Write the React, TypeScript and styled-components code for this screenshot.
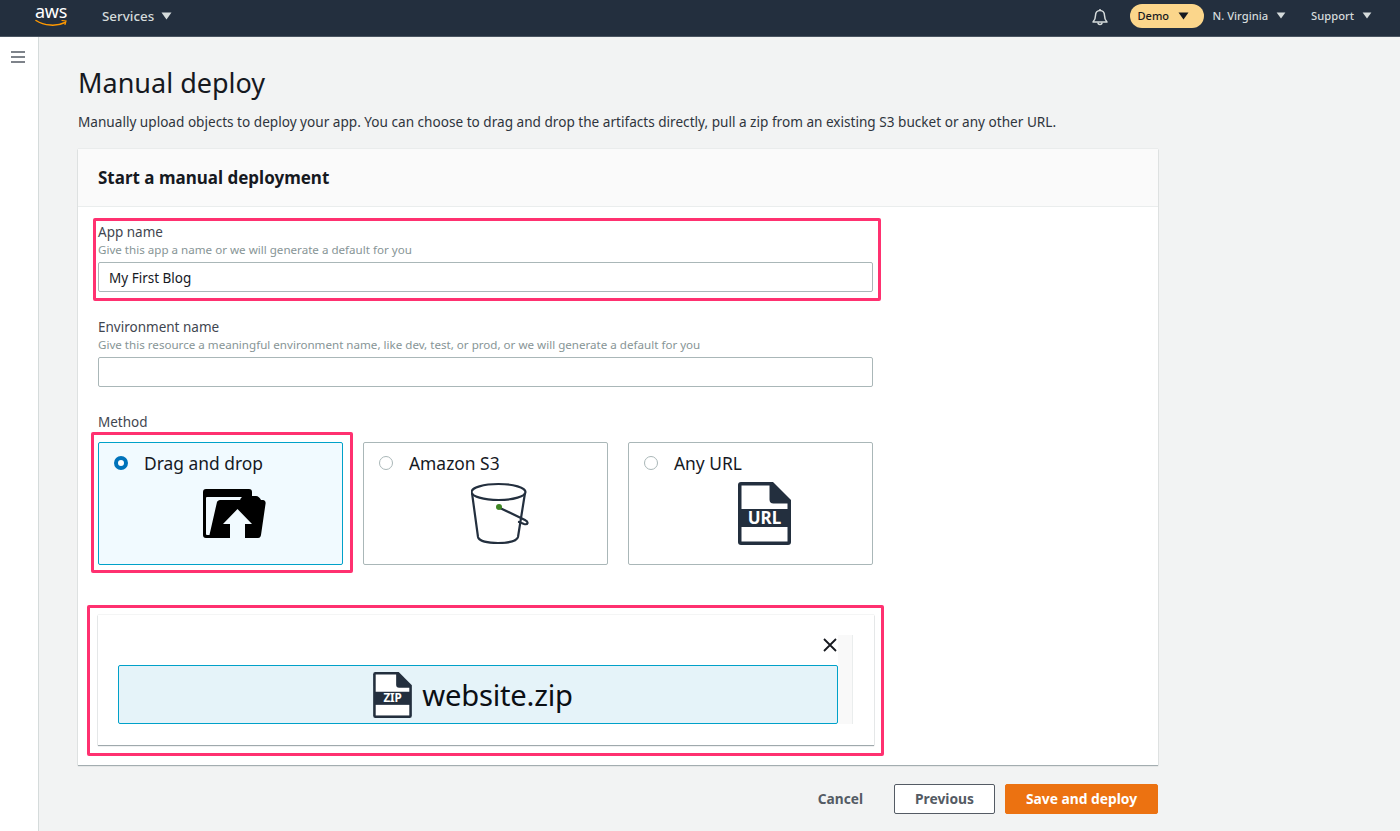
import React from "react";
import styled, { createGlobalStyle } from "styled-components";

const Global = createGlobalStyle`
  html, body { margin: 0; padding: 0; height: 831px; overflow: hidden; background: #f2f3f3; }
  body { font-family: "Noto Sans", "Open Sans", Arial, sans-serif; color: #16191f; }
  * { box-sizing: border-box; }
`;

const Page = styled.div`
  width: 1400px;
  height: 831px;
  display: flex;
  flex-direction: column;
`;

const TopBar = styled.header`
  height: 37px;
  flex: none;
  background: #232f3e;
  border-bottom: 1px solid #4a5561;
  display: flex;
  align-items: center;
  color: #d5dbdb;
  padding: 0 28px 0 35px;
`;

const Logo = styled.div`
  width: 32px;
  height: 30px;
  color: #fff;
`;

const LogoText = styled.span`
  display: block;
  height: 16px;
  font-size: 18px;
  line-height: 16px;
  letter-spacing: -0.3px;
  text-align: center;
`;

const NavItem = styled.div<{ $ml?: number; $size?: number }>`
  display: flex;
  align-items: center;
  gap: ${(p) => (p.$size ? 7 : 8)}px;
  margin-left: ${(p) => p.$ml ?? 0}px;
  font-size: ${(p) => p.$size ?? 11.2}px;
  font-weight: 500;
  color: #d5dbdb;
  margin-top: -5px;
`;

const Caret = styled.svg`
  display: block;
  flex: none;
`;

const Spacer = styled.div`
  flex: 1;
`;

const Pill = styled.div`
  width: 74px;
  height: 24px;
  margin-left: 21px;
  margin-top: -5px;
  border-radius: 12px;
  background: #fbd68b;
  color: #16191f;
  font-size: 11px;
  font-weight: 500;
  display: flex;
  align-items: center;
  gap: 9px;
  padding-left: 8px;
`;

const BellIcon = styled.svg`
  margin-top: -3px;
`;

const Body = styled.div`
  flex: 1;
  display: flex;
  min-height: 0;
`;

const Rail = styled.aside`
  width: 39px;
  flex: none;
  background: #fff;
  border-right: 1px solid #d5dbdb;
  padding: 14px 0 0 11px;
`;

const Main = styled.main`
  flex: 1;
  padding: 27px 0 0 39px;
`;

const Title = styled.h1`
  margin: 0;
  font-size: 27px;
  line-height: 38px;
  font-weight: 400;
  color: #16191f;
`;

const Lead = styled.p`
  margin: 10px 0 0;
  font-size: 13.6px;
  line-height: 20px;
  color: #2f353d;
`;

const Card = styled.section`
  width: 1080px;
  height: 616px;
  margin-top: 17px;
  background: #fff;
  box-shadow: 0 1px 1px 0 rgba(0, 28, 36, 0.3), 0 0 1px 0 rgba(0, 28, 36, 0.2);
`;

const CardHead = styled.div`
  height: 58px;
  background: #fafafa;
  border-bottom: 1px solid #eaeded;
  padding: 0 20px;
  display: flex;
  align-items: center;
  font-size: 17px;
  font-weight: 700;
  color: #16191f;
`;

const Form = styled.div`
  width: 815px;
  padding: 15px 20px 0;
`;

const Field = styled.div<{ $mt?: number }>`
  position: relative;
  margin-top: ${(p) => p.$mt ?? 0}px;
`;

const Label = styled.div`
  font-size: 13.5px;
  line-height: 20px;
  color: #3f4650;
`;

const Hint = styled.div`
  font-size: 11.6px;
  line-height: 16px;
  color: #879596;
`;

const Input = styled.div`
  height: 30px;
  margin-top: 4px;
  border: 1px solid #aab7b8;
  border-radius: 2px;
  background: #fff;
  padding: 1px 10px 0;
  display: flex;
  align-items: center;
  font-size: 13.5px;
  color: #16191f;
`;

const Highlight = styled.div<{ $t: number; $r: number; $b: number; $l: number }>`
  position: absolute;
  top: ${(p) => p.$t}px;
  right: ${(p) => p.$r}px;
  bottom: ${(p) => p.$b}px;
  left: ${(p) => p.$l}px;
  border: 3px solid #ff3170;
  border-radius: 2px;
  pointer-events: none;
`;

const Tiles = styled.div`
  display: grid;
  grid-template-columns: repeat(3, 245px);
  column-gap: 20px;
  margin-top: 10px;
`;

const TileWrap = styled.div`
  position: relative;
`;

const Tile = styled.div<{ $on?: boolean }>`
  height: 123px;
  border: 1px solid ${(p) => (p.$on ? "#00a1c9" : "#aab7b8")};
  border-radius: 2px;
  background: ${(p) => (p.$on ? "#f1faff" : "#fff")};
  padding: 9px 15px 0;
`;

const TileHead = styled.div`
  display: flex;
  align-items: center;
  height: 22px;
  gap: 16px;
  font-size: 17.4px;
  color: #16191f;
`;

const Radio = styled.span<{ $on?: boolean }>`
  width: 14px;
  height: 14px;
  flex: none;
  border-radius: 50%;
  background: #fff;
  border: ${(p) => (p.$on ? "4px solid #0073bb" : "1px solid #aab7b8")};
`;

const TileIcon = styled.div<{ $mt: number; $pl?: number }>`
  display: flex;
  justify-content: center;
  margin-top: ${(p) => p.$mt}px;
  padding-left: ${(p) => p.$pl ?? 27}px;
`;

const DropArea = styled.div`
  position: relative;
  margin-top: 50px;
`;

const Upload = styled.div`
  width: 776px;
  height: 130px;
  background: #fff;
  box-shadow: 0 1px 1px 0 rgba(0, 28, 36, 0.35), 0 0 1px 0 rgba(0, 28, 36, 0.25);
  padding: 20px 20px 0;
`;

const Scroller = styled.div`
  width: 735px;
  height: 89px;
  position: relative;
  display: flex;
  flex-direction: column;
  justify-content: flex-end;
  background: linear-gradient(to right, #fff 720px, #f9f9f9 720px);
  border-right: 1px solid #eaeded;
`;

const Close = styled.svg`
  position: absolute;
  top: 3px;
  right: 15px;
`;

const ZipBar = styled.div`
  width: 720px;
  height: 59px;
  background: #e5f3f9;
  border: 1px solid #00a1c9;
  border-radius: 2px;
  display: flex;
  justify-content: center;
  align-items: center;
  gap: 10px;
  font-size: 29.2px;
  letter-spacing: -0.2px;
  color: #0b0f14;
  padding-right: 10px;
`;

const Footer = styled.div`
  width: 1080px;
  margin-top: 19px;
  display: flex;
  justify-content: flex-end;
  align-items: center;
`;

const LinkButton = styled.div`
  font-size: 13.7px;
  font-weight: 700;
  color: #545b64;
  margin-right: 31px;
  padding-bottom: 2px;
`;

const Button = styled.div<{ $primary?: boolean }>`
  height: 30px;
  display: flex;
  align-items: center;
  justify-content: center;
  width: ${(p) => (p.$primary ? 153 : 101)}px;
  margin-left: ${(p) => (p.$primary ? 10 : 0)}px;
  padding-bottom: 2px;
  border-radius: 2px;
  font-size: 13.8px;
  font-weight: 700;
  color: ${(p) => (p.$primary ? "#fff" : "#545b64")};
  background: ${(p) => (p.$primary ? "#ec7211" : "#fff")};
  border: 1px solid ${(p) => (p.$primary ? "#ec7211" : "#545b64")};
`;

const CaretDown = ({ color = "#d5dbdb", w = 11, h = 8 }: { color?: string; w?: number; h?: number }) => (
  <Caret width={w} height={h} viewBox="0 0 11 8">
    <path d="M0.5 0.5h10L5.5 7.5z" fill={color} />
  </Caret>
);

const FileIcon = ({ label, w, h, size }: { label: string; w: number; h: number; size: number }) => (
  <svg width={w} height={h} viewBox="0 0 53 63" style={{ display: "block", flex: "none" }}>
    <path d="M3 0h32l18 18v42a3 3 0 0 1-3 3H3a3 3 0 0 1-3-3V3a3 3 0 0 1 3-3z" fill="#232f3e" />
    <path d="M3.5 3.500h28v14a4 4 0 0 0 4 4h14v5.500h-46z" fill="#fff" />
    <rect x="3.500" y="45" width="46" height="14.500" fill="#fff" />
    <text
      x="26.500"
      y="41.500"
      textAnchor="middle"
      fontFamily="'Noto Sans', sans-serif"
      fontWeight="700"
      fontSize={size}
      fill="#fff"
    >
      {label}
    </text>
  </svg>
);

export default function App() {
  return (
    <Page>
      <Global />
      <TopBar>
        <Logo>
          <LogoText>aws</LogoText>
          <svg width="33" height="9" viewBox="0 0 33 9" style={{ display: "block" }}>
            <path d="M1 1.500C9 7 22 7.500 30 3.500" fill="none" stroke="#f90" strokeWidth="1.500" strokeLinecap="round" />
            <path d="M27 1.500l4 .5-1 3.500" fill="none" stroke="#f90" strokeWidth="1.200" strokeLinecap="round" />
          </svg>
        </Logo>
        <NavItem $ml={35} $size={13.4}>
          Services
          <CaretDown />
        </NavItem>
        <Spacer />
        <BellIcon width="18" height="18" viewBox="0 0 18 18">
          <path
            d="M2 14c2-2 2.500-3.500 2.500-6.500C4.500 4.500 6.500 2.500 9 2.500s4.500 2 4.500 5c0 3 .5 4.500 2.500 6.500z"
            fill="none"
            stroke="#d5dbdb"
            strokeWidth="1.500"
            strokeLinejoin="round"
          />
          <path d="M7 14.500a2 2 0 0 0 4 0M9 1v1.500" fill="none" stroke="#d5dbdb" strokeWidth="1.500" />
        </BellIcon>
        <Pill>
          Demo
          <CaretDown color="#16191f" />
        </Pill>
        <NavItem $ml={9}>
          N. Virginia
          <CaretDown w={10} h={7} />
        </NavItem>
        <NavItem $ml={25}>
          Support
          <CaretDown w={10} h={7} />
        </NavItem>
      </TopBar>
      <Body>
        <Rail>
          <svg width="14" height="12" viewBox="0 0 14 12" style={{ display: "block" }}>
            <path d="M0 1h14M0 6h14M0 11h14" stroke="#545b64" strokeWidth="1.600" />
          </svg>
        </Rail>
        <Main>
          <Title>Manual deploy</Title>
          <Lead>
            Manually upload objects to deploy your app. You can choose to drag and drop the artifacts directly, pull a
            zip from an existing S3 bucket or any other URL.
          </Lead>
          <Card>
            <CardHead>Start a manual deployment</CardHead>
            <Form>
              <Field>
                <Label>App name</Label>
                <Hint>Give this app a name or we will generate a default for you</Hint>
                <Input>My First Blog</Input>
                <Highlight $t={-4} $r={-8} $b={-9} $l={-5} />
              </Field>
              <Field $mt={25}>
                <Label>Environment name</Label>
                <Hint>Give this resource a meaningful environment name, like dev, test, or prod, or we will generate a default for you</Hint>
                <Input />
              </Field>
              <Field $mt={25}>
                <Label>Method</Label>
                <Tiles>
                  <TileWrap>
                    <Tile $on>
                      <TileHead>
                        <Radio $on />
                        Drag and drop
                      </TileHead>
                      <TileIcon $mt={15} $pl={29}>
                        <svg width="63" height="49" viewBox="0 0 63 49" style={{ display: "block", marginLeft: -2 }}>
                          <path
                            d="M3 0H46a3 3 0 0 1 3 3v5H4a1 1 0 0 0-1 1v36a1 1 0 0 0 1 1h5v3H3a3 3 0 0 1-3-3V3a3 3 0 0 1 3-3z"
                            fill="#000"
                          />
                          <path
                            d="M17 11H37C38 8 40 7 42 7H53C55 7 57 9 58 11H60C62 11 63 13 62.500 15L58 46C57.500 48 57 49 55 49H42V35H49L34.500 20 20 35H27V49H7a1 1 0 0 1-1-1L14 13C14.500 12 15.500 11 17 11z"
                            fill="#000"
                          />
                        </svg>
                      </TileIcon>
                    </Tile>
                    <Highlight $t={-10} $r={-10} $b={-8} $l={-7} />
                  </TileWrap>
                  <Tile>
                    <TileHead>
                      <Radio />
                      Amazon S3
                    </TileHead>
                    <TileIcon $mt={8} $pl={31}>
                      <svg width="60" height="62" viewBox="0 0 60 62" style={{ display: "block" }}>
                        <ellipse cx="27.500" cy="10" rx="27" ry="8" fill="none" stroke="#232f3e" strokeWidth="2.200" />
                        <path d="M1 11l6 44c1 4 10 6 20 6s19-2 20-6l7-44" fill="none" stroke="#232f3e" strokeWidth="2.200" />
                        <path
                          d="M29 26l25 12c4 2 3 5-1 4l-5-2"
                          fill="none"
                          stroke="#232f3e"
                          strokeWidth="2.200"
                          strokeLinecap="round"
                        />
                        <circle cx="28" cy="25" r="3" fill="#3f8624" />
                      </svg>
                    </TileIcon>
                  </Tile>
                  <Tile>
                    <TileHead>
                      <Radio />
                      Any URL
                    </TileHead>
                    <TileIcon $mt={8}>
                      <FileIcon label="URL" w={53} h={63} size={17} />
                    </TileIcon>
                  </Tile>
                </Tiles>
              </Field>
              <DropArea>
                <Upload>
                  <Scroller>
                    <Close width="14" height="14" viewBox="0 0 14 14">
                      <path d="M1 1l12 12M13 1L1 13" stroke="#16191f" strokeWidth="1.800" />
                    </Close>
                    <ZipBar>
                      <FileIcon label="ZIP" w={39} h={46} size={16} />
                      website.zip
                    </ZipBar>
                  </Scroller>
                </Upload>
                <Highlight $t={-10} $r={-11} $b={-11} $l={-11} />
              </DropArea>
            </Form>
          </Card>
          <Footer>
            <LinkButton>Cancel</LinkButton>
            <Button>Previous</Button>
            <Button $primary>Save and deploy</Button>
          </Footer>
        </Main>
      </Body>
    </Page>
  );
}
